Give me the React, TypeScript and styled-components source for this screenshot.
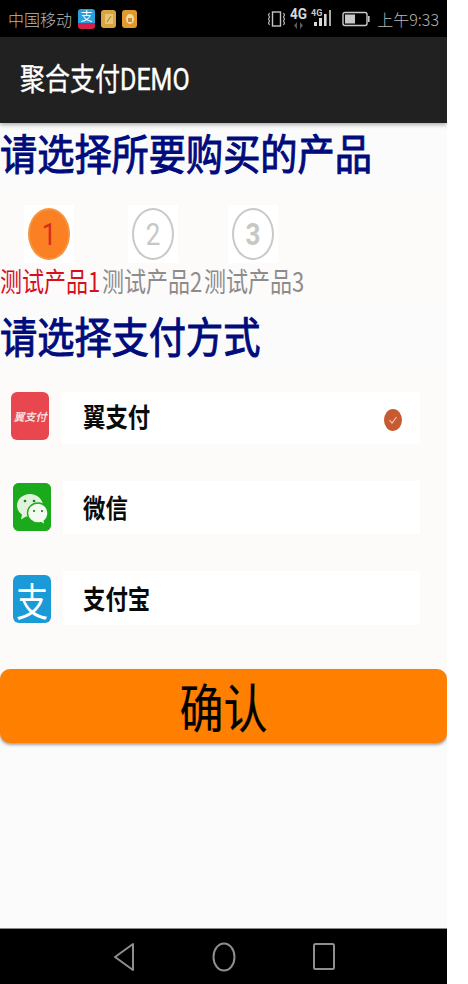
import React from "react";
import styled, { createGlobalStyle } from "styled-components";

const CJK = `"Noto Sans CJK SC", "Noto Sans", sans-serif`;

const GlobalStyle = createGlobalStyle`
  html, body {
    margin: 0;
    padding: 0;
    background: #ffffff;
  }
  * {
    box-sizing: border-box;
  }
`;

const Screen = styled.div`
  width: 447px;
  height: 984px;
  display: flex;
  flex-direction: column;
  background: #fbfbfb;
  font-family: ${CJK};
  overflow: hidden;
`;

const StatusBar = styled.div`
  height: 37px;
  flex: none;
  background: #000;
  color: #b9b9b9;
  display: flex;
  align-items: center;
  justify-content: space-between;
  padding: 0 8px 0 8px;
`;

const StatusGroup = styled.div<{ $gap: number }>`
  display: flex;
  align-items: center;
  gap: ${(p) => p.$gap}px;
`;

const StatusText = styled.span`
  font-size: 16px;
  line-height: 20px;
  font-weight: 300;
  white-space: nowrap;
`;

const Clock = styled(StatusText)`
  margin-left: 3px;
`;

const NotifyIcon = styled.span<{ $bg: string }>`
  width: 15px;
  height: 18px;
  border-radius: 3px;
  background: ${(p) => p.$bg};
  display: flex;
  align-items: center;
  justify-content: center;
`;

const AlipayMini = styled.span`
  width: 17px;
  height: 20px;
  border-radius: 3px;
  background: linear-gradient(#2a9fdc 0 70%, #d8204f 70%);
  color: #fff;
  font-size: 12px;
  line-height: 14px;
  text-align: center;
`;

const AppBar = styled.header`
  height: 86px;
  flex: none;
  background: #212121;
  box-shadow: 0 2px 4px rgba(0, 0, 0, 0.3);
  display: flex;
  align-items: center;
  padding: 0 0 1px 20px;
  position: relative;
`;

const AppTitle = styled.h1`
  margin: 0;
  color: #fff;
  font-size: 25px;
  font-weight: 400;
  line-height: 1;
  -webkit-text-stroke: 0.3px #fff;
  transform: scaleY(1.22);
  font-family: Roboto, ${CJK};
`;

const Heading = styled.h2<{ $height: number; $lift: number }>`
  margin: 0;
  height: ${(p) => p.$height}px;
  padding-bottom: ${(p) => p.$lift}px;
  flex: none;
  display: flex;
  align-items: center;
  color: #000c7c;
  font-size: 37.2px;
  font-weight: 400;
  line-height: 1;
  -webkit-text-stroke: 0.9px #000c7c;
  white-space: nowrap;
`;

const HeadingText = styled.span`
  display: inline-block;
  transform: scaleY(1.14);
`;

const Band = styled.section`
  flex: none;
  background: #fdfafa;
  display: flex;
  flex-direction: column;
`;

const Steps = styled.div`
  display: flex;
  padding-top: 7px;
`;

const Step = styled.div<{ $width: number }>`
  width: ${(p) => p.$width}px;
  display: flex;
  flex-direction: column;
  align-items: flex-start;
`;

const StepIconWrap = styled.div<{ $inset: number }>`
  width: 50px;
  height: 58px;
  margin-left: ${(p) => p.$inset}px;
  background: #fff;
  display: flex;
  align-items: center;
  justify-content: center;
`;

const StepCircle = styled.div<{ $active: boolean; $weight: number }>`
  width: 42px;
  height: 52px;
  border-radius: 50%;
  display: flex;
  align-items: center;
  justify-content: center;
  font-family: Roboto, sans-serif;
  font-size: 26px;
  font-weight: ${(p) => p.$weight};
  line-height: 1;
  background: ${(p) => (p.$active ? "#fb7f23" : "#fff")};
  border: 2px solid ${(p) => (p.$active ? "#f6953f" : "#c9cac8")};
  color: ${(p) => (p.$active ? "#d2301c" : "#c6c8c4")};
`;

const StepDigit = styled.span`
  display: inline-block;
  transform: scaleY(1.2);
`;

const StepLabel = styled.div<{ $active: boolean }>`
  margin-top: 1px;
  height: 32px;
  display: flex;
  align-items: center;
  font-size: 22px;
  line-height: 1;
  font-weight: 400;
  white-space: nowrap;
  color: ${(p) => (p.$active ? "#d4101c" : "#8c8c8c")};
`;

const StepLabelText = styled.span`
  display: inline-block;
  transform: scaleY(1.22);
`;

const Payments = styled(Band)`
  padding: 16px 0 44px;
`;

const PayRow = styled.div<{ $inset: number; $height: number; $gap: number }>`
  height: ${(p) => p.$height}px;
  margin-bottom: ${(p) => p.$gap}px;
  display: flex;
  align-items: flex-start;
  padding-left: ${(p) => p.$inset}px;
  padding-right: 27px;
`;

const PayIcon = styled.div<{ $bg: string; $drop: number }>`
  width: 38px;
  height: 48px;
  flex: none;
  margin-top: ${(p) => p.$drop}px;
  border-radius: 6px;
  background: ${(p) => p.$bg};
  color: #fff;
  display: flex;
  align-items: center;
  justify-content: center;
`;

const BestpayMark = styled.span`
  font-size: 11px;
  font-style: italic;
  font-weight: 700;
  white-space: nowrap;
  color: #f8dcdc;
`;

const AlipayMark = styled.span`
  font-size: 32px;
  line-height: 1;
  font-weight: 400;
  transform: scaleY(1.2);
`;

const PayPanel = styled.div<{ $lift: number; $pad: number }>`
  flex: 1;
  height: 100%;
  margin-left: 12px;
  padding: 0 18px ${(p) => p.$lift}px ${(p) => p.$pad}px;
  background: #fff;
  display: flex;
  align-items: center;
  justify-content: space-between;
`;

const PayName = styled.span`
  color: #0a0a0a;
  font-size: 22.400px;
  font-weight: 700;
  line-height: 1;
  display: inline-block;
  transform: scaleY(1.18);
`;

const CheckMark = styled.span`
  width: 18px;
  height: 22px;
  margin-top: 8px;
  border-radius: 50%;
  background: #c85a32;
  display: flex;
  align-items: center;
  justify-content: center;
`;

const ConfirmButton = styled.button`
  flex: none;
  width: 100%;
  height: 74px;
  padding: 0;
  border: 0;
  border-radius: 10px;
  background: #ff8000;
  box-shadow: 0 2px 3px rgba(0, 0, 0, 0.35);
  color: #000;
  font-family: ${CJK};
  font-size: 44px;
  line-height: 1;
  -webkit-text-stroke: 0.2px #000;
  position: relative;
`;

const ConfirmText = styled.span`
  display: inline-block;
  transform: scaleY(1.18);
`;

const Spacer = styled.div`
  flex: 1;
  background: #fbfbfb;
`;

const NavBar = styled.nav`
  height: 56px;
  flex: none;
  background: #000;
  border-top: 1px solid #8a8a8a;
  display: flex;
  align-items: center;
  justify-content: center;
  gap: 77px;
`;

const WeChatSvg = styled.svg`
  display: block;
  border-radius: 6px;
`;

const StepsData = [
  { num: "1", label: "测试产品1", width: 102, inset: 24, weight: 400 },
  { num: "2", label: "测试产品2", width: 102, inset: 26, weight: 400 },
  { num: "3", label: "测试产品3", width: 102, inset: 24, weight: 700 },
];

const Vibrate = () => (
  <svg width="19" height="18" viewBox="0 0 19 18" fill="none" stroke="#c4c4c4">
    <rect x="5.500" y="2" width="8" height="14" strokeWidth="1.400" />
    <path d="M2.500 3l-1 2 1 2-1 2 1 2-1 2 1 2M16.500 3l1 2-1 2 1 2-1 2 1 2-1 2" strokeWidth="1.100" />
  </svg>
);

const FourG = () => (
  <svg width="17" height="26" viewBox="0 0 17 26">
    <text x="0" y="13" fill="#d8d8d8" fontSize="14" fontWeight="700" fontFamily="Roboto, sans-serif" textLength="17" lengthAdjust="spacingAndGlyphs">
      4G
    </text>
    <path d="M7 16v7l-3-3.500zM10 16v7l3-3.500z" fill="#5a5a5a" />
  </svg>
);

const Signal = () => (
  <svg width="22" height="24" viewBox="0 0 22 24">
    <text x="0" y="9" fill="#c8c8c8" fontSize="9" fontWeight="700" fontFamily="Roboto, sans-serif">
      4G
    </text>
    <g fill="#d8d8d8">
      <rect x="3" y="15" width="3" height="4" />
      <rect x="8" y="11" width="3" height="8" />
      <rect x="13" y="7" width="2.600" height="12" />
      <rect x="18" y="3" width="2" height="16" fill="#a8a8a8" />
    </g>
  </svg>
);

const Battery = () => (
  <svg width="33" height="16" viewBox="0 0 33 16" fill="none">
    <rect x="6" y="1.500" width="24" height="13" rx="2" stroke="#c8c8c8" strokeWidth="1.400" />
    <rect x="8" y="3.500" width="10" height="9" fill="#c8c8c8" />
    <rect x="31" y="5" width="1.600" height="6" fill="#c8c8c8" />
  </svg>
);

const PuzzleGlyph = () => (
  <svg width="10" height="12" viewBox="0 0 10 12" fill="none">
    <rect x="1" y="1" width="8" height="10" rx="1" fill="#e8c878" />
    <path d="M7 3L3 9" stroke="#b98a2c" strokeWidth="1.200" />
  </svg>
);

const LockGlyph = () => (
  <svg width="10" height="12" viewBox="0 0 10 12">
    <ellipse cx="5" cy="6" rx="4" ry="5" fill="#f0d9a8" />
    <rect x="3" y="5" width="4" height="4" fill="#c98a2c" />
  </svg>
);

const WeChatLogo = () => (
  <WeChatSvg width="38" height="48" viewBox="0 0 38 48">
    <rect width="38" height="48" fill="#1aaa1c" />
    <path d="M17 11c-7 0-13 5-13 11.500 0 3.800 2 6.900 5 9l-1 5 5-3c1.300.3 2.600.5 4 .5 7 0 13-5.500 13-11.500S24 11 17 11z" fill="#dff3da" />
    <path d="M25 20c-6 0-10.500 4.500-10.500 10S19 40 25 40c1 0 2-.1 3-.4l4 2.400-.8-4c2.300-1.800 3.800-4.500 3.800-7.800 0-5.700-4.500-10.200-10-10.200z" fill="#f3fbf1" stroke="#1aaa1c" strokeWidth="1.400" />
    <g fill="#1a7a1c">
      <circle cx="12" cy="18" r="1.300" />
      <circle cx="21" cy="18" r="1.300" />
      <circle cx="21" cy="28" r="1.100" />
      <circle cx="29" cy="28" r="1.100" />
    </g>
  </WeChatSvg>
);

const BackIcon = () => (
  <svg width="22" height="30" viewBox="0 0 22 30" fill="none">
    <path d="M20 2v26L2 15z" stroke="#8e8e8e" strokeWidth="2" strokeLinejoin="round" />
  </svg>
);

const HomeIcon = () => (
  <svg width="24" height="30" viewBox="0 0 24 30" fill="none">
    <ellipse cx="12" cy="15" rx="10.500" ry="13.500" stroke="#8e8e8e" strokeWidth="2" />
  </svg>
);

const RecentIcon = () => (
  <svg width="22" height="27" viewBox="0 0 22 27" fill="none">
    <rect x="1" y="1" width="20" height="25" rx="1.500" stroke="#8e8e8e" strokeWidth="2" />
  </svg>
);

const App = () => {
  return (
    <>
      <GlobalStyle />
      <Screen>
        <StatusBar>
          <StatusGroup $gap={6}>
            <StatusText>中国移动</StatusText>
            <AlipayMini>支</AlipayMini>
            <NotifyIcon $bg="#d9a441">
              <PuzzleGlyph />
            </NotifyIcon>
            <NotifyIcon $bg="#e09a2c">
              <LockGlyph />
            </NotifyIcon>
          </StatusGroup>
          <StatusGroup $gap={4}>
            <Vibrate />
            <FourG />
            <Signal />
            <Battery />
            <Clock>上午9:33</Clock>
          </StatusGroup>
        </StatusBar>
        <AppBar>
          <AppTitle>聚合支付DEMO</AppTitle>
        </AppBar>
        <Heading $height={75} $lift={16}>
          <HeadingText>请选择所要购买的产品</HeadingText>
        </Heading>
        <Band>
          <Steps>
            {StepsData.map((step, inx) => (
              <Step key={step.num} $width={step.width}>
                <StepIconWrap $inset={step.inset}>
                  <StepCircle $active={inx === 0} $weight={step.weight}>
                    <StepDigit>{step.num}</StepDigit>
                  </StepCircle>
                </StepIconWrap>
                <StepLabel $active={inx === 0}>
                  <StepLabelText>{step.label}</StepLabelText>
                </StepLabel>
              </Step>
            ))}
          </Steps>
        </Band>
        <Heading $height={80} $lift={0}>
          <HeadingText>请选择支付方式</HeadingText>
        </Heading>
        <Payments>
          <PayRow $inset={11} $height={52} $gap={37}>
            <PayIcon $bg="#e8474f" $drop={0}>
              <BestpayMark>翼支付</BestpayMark>
            </PayIcon>
            <PayPanel $lift={5} $pad={22}>
              <PayName>翼支付</PayName>
              <CheckMark>
                <svg width="10" height="10" viewBox="0 0 10 10" fill="none">
                  <path d="M1.500 5l2.500 3 4.500-6" stroke="#f3d0b8" strokeWidth="1.100" />
                </svg>
              </CheckMark>
            </PayPanel>
          </PayRow>
          <PayRow $inset={13} $height={53} $gap={37}>
            <PayIcon $bg="#1aaa1c" $drop={2}>
              <WeChatLogo />
            </PayIcon>
            <PayPanel $lift={2} $pad={20}>
              <PayName>微信</PayName>
            </PayPanel>
          </PayRow>
          <PayRow $inset={13} $height={54} $gap={0}>
            <PayIcon $bg="#1b9ad8" $drop={4}>
              <AlipayMark>支</AlipayMark>
            </PayIcon>
            <PayPanel $lift={1} $pad={20}>
              <PayName>支付宝</PayName>
            </PayPanel>
          </PayRow>
        </Payments>
        <ConfirmButton>
          <ConfirmText>确认</ConfirmText>
        </ConfirmButton>
        <Spacer />
        <NavBar>
          <BackIcon />
          <HomeIcon />
          <RecentIcon />
        </NavBar>
      </Screen>
    </>
  );
};

export default App;
